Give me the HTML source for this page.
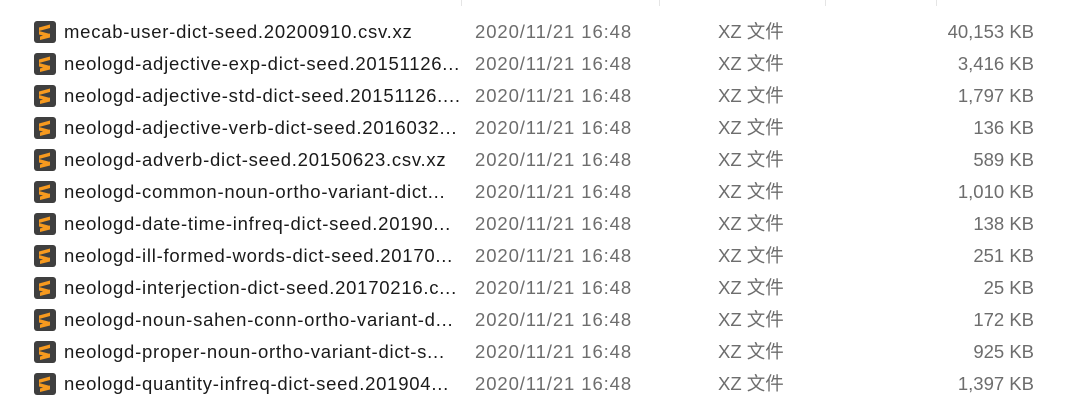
<!DOCTYPE html><html><head><meta charset="utf-8"><style>
body{margin:0;width:1084px;height:405px;background:#fff;overflow:hidden;font-family:"Liberation Sans","Noto Sans CJK SC",sans-serif;font-size:18.5px;letter-spacing:0.5px;position:relative}
.sep{position:absolute;top:0;width:1px;height:6px;background:#e5e5e5}
.row{position:absolute;left:0;height:32px;width:1084px;line-height:32px}
.ic{position:absolute;left:34px;top:5px;width:22px;height:22px;border-radius:3px;background:#3f3f3f}
.n{position:absolute;left:64px;color:#1a1a1a;white-space:nowrap;letter-spacing:0.75px}
.d{position:absolute;left:475px;color:#6d6d6d;letter-spacing:0.9px}
.t{position:absolute;left:718px;color:#6d6d6d;letter-spacing:0}
.s{position:absolute;right:50px;color:#6d6d6d;letter-spacing:0}
</style></head><body>
<div class="sep" style="left:461px"></div><div class="sep" style="left:659px"></div><div class="sep" style="left:825px"></div><div class="sep" style="left:936px"></div>
<div id="c"></div>
<script>
const r=[["mecab-user-dict-seed.20200910.csv.xz","40,153 KB"],["neologd-adjective-exp-dict-seed.20151126...","3,416 KB"],["neologd-adjective-std-dict-seed.20151126....","1,797 KB"],["neologd-adjective-verb-dict-seed.2016032...","136 KB"],["neologd-adverb-dict-seed.20150623.csv.xz","589 KB"],["neologd-common-noun-ortho-variant-dict...","1,010 KB"],["neologd-date-time-infreq-dict-seed.20190...","138 KB"],["neologd-ill-formed-words-dict-seed.20170...","251 KB"],["neologd-interjection-dict-seed.20170216.c...","25 KB"],["neologd-noun-sahen-conn-ortho-variant-d...","172 KB"],["neologd-proper-noun-ortho-variant-dict-s...","925 KB"],["neologd-quantity-infreq-dict-seed.201904...","1,397 KB"]];
let h="";r.forEach((x,i)=>{h+=`<div class="row" style="top:${16+i*32}px"><div class="ic"><svg width="22" height="22" viewBox="0 0 22 22"><path d="M5 6.5 L16 3.5 L16 7 L5 10 Z M5 10 L16 13 L16 16.5 L5 13.5Z M6 15.5 L16 12.5 L16 16.5 L6 19Z M5 6.5 L9 7.5 L5 10Z" fill="#f79a1f"/></svg></div><span class="n">${x[0]}</span><span class="d">2020/11/21 16:48</span><span class="t">XZ 文件</span><span class="s">${x[1]}</span></div>`});
document.getElementById("c").innerHTML=h;
</script>
</body></html>
